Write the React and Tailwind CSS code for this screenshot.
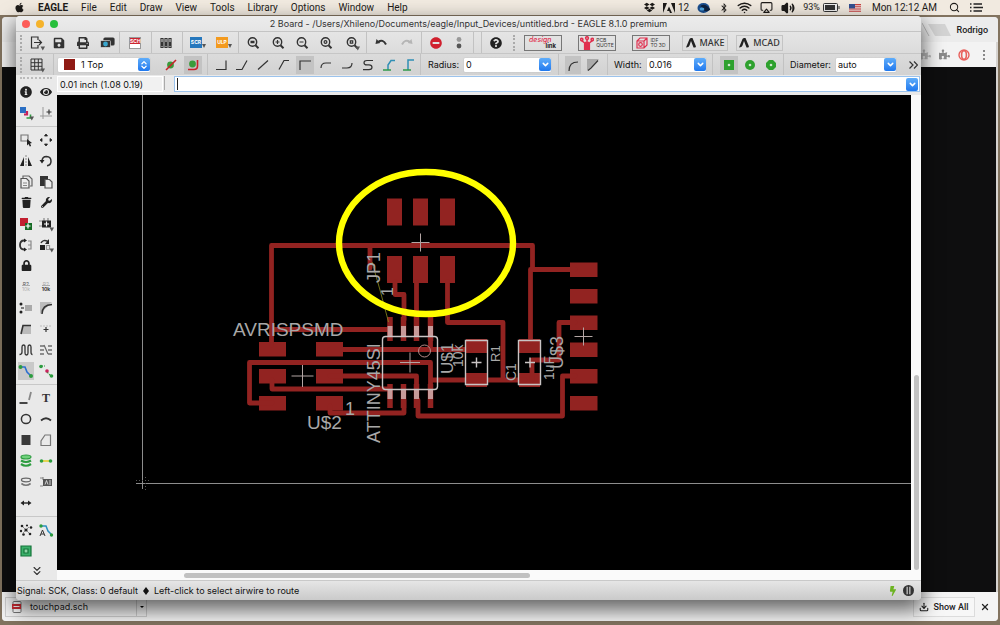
import React from 'react';
import {
  FaApple, FaDropbox, FaBluetoothB, FaSave, FaPrint, FaTrash, FaWrench, FaLock,
  FaInfoCircle, FaEye, FaQuestionCircle, FaMinusCircle, FaPuzzlePiece, FaBolt,
} from 'react-icons/fa';
import { Wifi, Airplay, Volume2, Search, ChevronsDown, ChevronDown, ChevronsUpDown, Download, X } from 'lucide-react';

const Svg = ({ size = 'w-4 h-4', children }) => (
  <svg viewBox="0 0 16 16" className={size} fill="none" stroke="#333" strokeWidth="1.2">
    {children}
  </svg>
);

const Tri = () => <path d="M11.5 11.5h4.5l-2.2 4z" fill="#555" stroke="none" />;

/* ---------- shared controls ---------- */

const Tool = ({ w = 'w-6', label, active, children }) => (
  <div className={`${w} shrink-0 flex justify-center`}>
    <button
      type="button"
      aria-label={label}
      className={`flex items-center justify-center h-[18px] w-[18px] ${active ? 'bg-[#c3c3c3]' : ''}`}
    >
      {children}
    </button>
  </div>
);

const Sep = ({ w = 'w-1' }) => (
  <div className={`${w} shrink-0 h-full flex justify-center`}>
    <div className="w-px h-full bg-[#c2c2c2]"></div>
  </div>
);

const Handle = ({ w = 'w-[10px]' }) => (
  <div className={`${w} shrink-0 flex justify-center`}>
    <div className="h-4 border-l-2 border-dotted border-[#aaa]"></div>
  </div>
);

const Arrow = ({ both }) => (
  <span className="w-3 h-[13px] shrink-0 rounded-[2px] bg-linear-to-b from-[#5fadfa] to-[#1f78ee] flex items-center justify-center text-white pointer-events-none">
    {both ? <ChevronsUpDown size={10} strokeWidth={3} /> : <ChevronDown size={9} strokeWidth={4} />}
  </span>
);

const Combo = ({ id, w, value, swatch, both, label }) => (
  <div className={`${w} shrink-0 h-[14px] bg-white flex items-center shadow-[0_0_1px_#999] rounded-[1px]`}>
    {swatch && <span className="ml-[6px] mr-1 w-[11px] h-[11px] bg-[#8f1a14]"></span>}
    <select id={id} aria-label={label} className="appearance-none flex-1 min-w-0 pl-[2px] h-[14px] leading-[14px] bg-transparent outline-none">
      <option>{value}</option>
    </select>
    <Arrow both={both} />
  </div>
);

/* ---------- mac menu bar ---------- */

const menus = ['File', 'Edit', 'Draw', 'View', 'Tools', 'Library', 'Options', 'Window', 'Help'];

const MenuBar = () => (
  <header className="h-[15px] shrink-0 flex items-center bg-[#f1eae0] text-[10px] leading-[15px] text-[#1d1b19] pl-[14px] pr-[17px]">
    <FaApple size={11} />
    <nav className="flex gap-[13px] ml-[13px]">
      <a href="#app" className="font-bold">EAGLE</a>
      {menus.map((m) => (
        <a key={m} href={`#${m}`}>{m}</a>
      ))}
    </nav>
    <div className="ml-auto flex items-center">
      <FaDropbox size={11} />
      <svg viewBox="0 0 12 10" className="w-3 h-[10px] ml-2" fill="#1d1b19">
        <path d="M0 0h4L0 10zM12 0H8l4 10zM6 3.4l3 6.6H7L6.2 8H4z" />
      </svg>
      <span className="ml-[3px]">12</span>
      <svg viewBox="0 0 14 12" className="w-[14px] h-3 ml-2">
        <ellipse cx="6.5" cy="6" rx="6" ry="5" fill="#1b4f8f" />
        <path d="M2 5q4-4 8-1t3 4q-5 3-7-1t-4-2z" fill="#0d2240" />
        <ellipse cx="5" cy="7" rx="2.4" ry="1.6" fill="#4fa6e0" />
      </svg>
      <FaBluetoothB size={10} className="ml-[8px]" />
      <Wifi size={15} strokeWidth={2.4} className="ml-[8px]" />
      <Airplay size={13} strokeWidth={2} className="ml-[8px]" />
      <Volume2 size={14} strokeWidth={2.4} fill="#1d1b19" className="ml-[8px]" />
      <span className="ml-[8px] text-[9px]">93%</span>
      <svg viewBox="0 0 17 9" className="w-[17px] h-[9px] ml-[3px]">
        <rect x=".5" y=".5" width="14" height="8" rx="1" fill="#eee" stroke="#333" />
        <rect x="2" y="2" width="10" height="5" fill="#333" />
        <path d="M15.5 3v3h1V3z" fill="#333" />
      </svg>
      <svg viewBox="0 0 12 8" className="w-3 h-2 ml-[9px]">
        <rect width="12" height="8" fill="#f3dede" />
        <path d="M0 .6h12M0 2.8h12M0 5h12M0 7.2h12" stroke="#c8433f" strokeWidth="1.1" />
        <rect width="6" height="4.4" fill="#33508f" />
      </svg>
      <span className="ml-[11px]">Mon 12:12 AM</span>
      <Search size={11} strokeWidth={2.2} className="ml-3" />
      <svg viewBox="0 0 13 9" className="w-[13px] h-[9px] ml-[10px]" stroke="#222" strokeWidth="1.4">
        <path d="M0 1h1.5M3.500 1h8.500M0 4.500h1.500M3.500 4.500h9.500M0 8h1.500M3.500 8h8.500" />
      </svg>
    </div>
  </header>
);

/* ---------- browser window behind ---------- */

const BrowserWindow = () => (
  <div className="absolute top-[2px] bottom-[4px] left-[2px] right-[2px] flex flex-col rounded-[4px] overflow-hidden bg-[#d6d3d0]">
    <div className="h-[25px] shrink-0 bg-[#ececec] flex items-center justify-end pr-[10px]">
      <svg viewBox="0 0 30 14" className="w-[30px] h-[14px]">
        <path d="M6 1h17l6 12H13z" fill="#d3d3d3" />
        <path d="M0 0l7 13" stroke="#bbb" />
      </svg>
      <span className="ml-1 text-[9px] leading-3 font-medium text-[#222]">Rodrigo</span>
    </div>
    <div className="h-[25px] shrink-0 mr-[2px] bg-[#f3f3f3] flex items-center justify-end gap-[8px] pr-[6px]">
      <FaPuzzlePiece size={11} color="#b9b9b9" />
      <FaPuzzlePiece size={11} color="#8a8a8a" />
      <svg viewBox="0 0 12 12" className="w-3 h-3" fill="none" stroke="#e8605c">
        <circle cx="6" cy="6" r="5" strokeWidth="1.4" />
        <ellipse cx="6" cy="6" rx="2.400" ry="4.200" strokeWidth="1.600" />
      </svg>
      <svg viewBox="0 0 12 12" className="w-3 h-3" fill="#666">
        <circle cx="6" cy="2" r="1" /><circle cx="6" cy="6" r="1" /><circle cx="6" cy="10" r="1" />
      </svg>
    </div>
    <div className="flex-1 mr-[2px] bg-[#0e0e0f]"></div>
    <div className="h-[29px] shrink-0 bg-[#f4f4f4] flex items-center justify-between pl-[3px] pr-[8px] text-[9px] leading-3 text-[#222]">
      <div className="w-[142px] h-5 flex items-center border border-[#cfcfcf]">
        <svg viewBox="0 0 10 12" className="w-[10px] h-3 ml-[6px]">
          <rect x="1" y=".5" width="8" height="11" rx="1" fill="#fff" stroke="#777" />
          <rect x="0" y="3" width="9" height="5" fill="#d02b33" />
          <path d="M1.500 5.500h6" stroke="#fff" />
        </svg>
        <a href="#touchpad" className="ml-2 font-['Inter']">touchpad.sch</a>
        <button type="button" aria-label="Download options" className="ml-auto h-full w-[10px] border-l border-[#cfcfcf] flex items-center justify-center">
          <span className="border-x-2 border-t-2 border-x-transparent border-t-black"></span>
        </button>
      </div>
      <div className="flex items-center gap-[5px]">
        <button type="button" className="h-5 w-[62px] flex items-center justify-center gap-1 border border-[#dcdcdc] bg-[#f7f7f7] font-medium">
          <Download size={10} strokeWidth={2.6} />Show All
        </button>
        <button type="button" aria-label="Close shelf"><X size={10} strokeWidth={3} /></button>
      </div>
    </div>
  </div>
);

/* ---------- toolbars ---------- */

const Lens = ({ children, drop }) => (
  <Svg>
    <circle cx="7.500" cy="7" r="4.200" strokeWidth="1.400" />
    <path d="M10.500 10.200l3 3" strokeWidth="2" />
    {children}
    {drop && <Tri />}
  </Svg>
);

const Badge = ({ text, color, drop }) => (
  <span className="flex items-end">
    <span className={`w-3 h-[11px] text-[5px] leading-[11px] text-center font-bold text-white ${color}`}>{text}</span>
    {drop && <span className="border-x-2 border-t-4 border-x-transparent border-t-[#555]"></span>}
  </span>
);

const autodesk = (
  <svg viewBox="0 0 10 10" className="w-[10px] h-[10px]" fill="#222">
    <path d="M0 9.500L3.500 1q.5-1 2-1h1L9.800 8q.4 1-.6 1.500H7.500L5 3 3.500 7.500Q3 9.500 0 9.500z" />
  </svg>
);

const ActionBar = () => (
  <div className="h-[22px] flex items-center border-b border-[#c6c6c6]">
    <Handle />
    <Tool w="w-[22px]" label="Open">
      <Svg><path d="M9 5V2H2.500v11H9v-3M5 7.500h7M10 5l2.500 2.500L10 10" /><Tri /></Svg>
    </Tool>
    <Tool w="w-[22px]" label="Save"><FaSave size={12} color="#333" /></Tool>
    <Tool w="w-[26px]" label="Print"><FaPrint size={12} color="#333" /></Tool>
    <Tool w="w-[22px]" label="CAM">
      <Svg>
        <rect x="5" y="3" width="10" height="7" rx="1" fill="#333" />
        <rect x="1.500" y="5.500" width="10" height="7" rx="1" fill="#333" stroke="#eee" strokeWidth=".6" />
        <circle cx="6.500" cy="9" r="2.400" fill="#38a5cc" stroke="none" />
      </Svg>
    </Tool>
    <Sep w="w-[2px]" />
    <Tool w="w-[30px]" label="Schematic">
      <span className="w-3 h-3 border border-[#999] bg-white">
        <span className="block h-[6px] bg-[#cc2430] text-white text-[5px] leading-[6px] font-bold text-center">SCH</span>
      </span>
    </Tool>
    <Sep w="w-[2px]" />
    <Tool w="w-7" label="Library">
      <Svg>
        <path d="M4 3v10M8 3v10M12 3v10" strokeWidth="3.200" />
        <path d="M4 4v3M8 4v3M12 4v3" stroke="#ddd" strokeWidth="1" />
        <path d="M3.500 11.500h1M7.500 11.500h1M11.500 11.500h1" stroke="#ddd" />
      </Svg>
    </Tool>
    <Sep />
    <Tool w="w-7" label="Script"><Badge text="SCR" color="bg-[#2577bd]" drop /></Tool>
    <Tool label="ULP"><Badge text="ULP" color="bg-[#f39a1e]" drop /></Tool>
    <Sep />
    <Tool w="w-[26px]" label="Zoom to fit"><Lens><path d="M5.500 7h4" strokeWidth="2.600" /></Lens></Tool>
    <Tool label="Zoom in"><Lens><path d="M5.500 7h4M7.500 5v4" /></Lens></Tool>
    <Tool label="Zoom out"><Lens><path d="M5.500 7h4" /></Lens></Tool>
    <Tool label="Redraw"><Lens><circle cx="7.500" cy="7" r="1.400" /></Lens></Tool>
    <Tool w="w-7" label="Select zoom"><Lens drop><path d="M6.300 5.800h2.400v2.400H6.300z" /></Lens></Tool>
    <Sep w="w-px" />
    <Tool w="w-7" label="Undo">
      <Svg><path d="M5 7q5-3.500 8 2.500" strokeWidth="2" /><path d="M2.500 9l1-5 3.800 4z" fill="#333" stroke="none" /></Svg>
    </Tool>
    <Tool label="Redo">
      <Svg><path d="M11 7Q6 3.500 3 9.500" stroke="#b5b5b5" strokeWidth="2" /><path d="M13.500 9l-1-5-3.800 4z" fill="#b5b5b5" stroke="none" /></Svg>
    </Tool>
    <Sep />
    <Tool w="w-[26px]" label="Stop"><FaMinusCircle size={12} color="#d0202e" /></Tool>
    <Tool w="w-5" label="Go">
      <Svg><circle cx="8" cy="4.500" r="2.400" fill="#999" stroke="none" /><circle cx="8" cy="11" r="2.400" fill="#555" stroke="none" /></Svg>
    </Tool>
    <Sep w="w-2" />
    <Sep w="w-2" />
    <Tool w="w-[22px]" label="Help"><FaQuestionCircle size={12} color="#222" /></Tool>
    <Handle w="w-[13px]" />

    <div className="flex items-center gap-4 ml-1">
      <button type="button" className="w-[38px] h-4 border border-[#777] flex flex-col items-start justify-center pl-1 text-[7px] leading-[6px] font-medium italic text-[#e0304f]">
        design<span className="self-end pr-[5px] text-[6px] leading-[5px] font-bold not-italic text-[#222]">link</span>
      </button>
      <button type="button" className="w-[38px] h-4 border border-[#777] flex items-center justify-center gap-[2px]">
        <svg viewBox="0 0 12 12" className="w-[14px] h-[14px]" stroke="#e0304f" strokeWidth="1.300" fill="none">
          <path d="M4 12V6L1.500 4M6 12V3M8 12V6l2.500-2M5 12V5M7 12V5" />
          <circle cx="1.500" cy="3" r="1" /><circle cx="6" cy="1.800" r="1.200" /><circle cx="10.500" cy="3" r="1" />
        </svg>
        <span className="text-[5px] leading-[5px] text-left text-[#333]">PCB<br />QUOTE</span>
      </button>
      <button type="button" className="w-[38px] h-4 border border-[#777] flex items-center justify-center gap-[2px]">
        <svg viewBox="0 0 12 12" className="w-3 h-3" stroke="#e0304f" strokeWidth="1.200" fill="none">
          <path d="M1 4l3-3h7v7l-3 3H1zM1 4h7v7M8 4l3-3" />
          <circle cx="4.500" cy="7.500" r="1.800" />
        </svg>
        <span className="text-[5px] leading-[5px] text-left text-[#333]">IDF<br />TO 3D</span>
      </button>
    </div>
    <div className="flex items-center gap-2 ml-3 text-[9px] font-medium text-[#333] font-['Noto_Sans',sans-serif]">
      <button type="button" className="h-4 w-[46px] border border-[#c4c4c4] flex items-center justify-center gap-1">{autodesk}MAKE</button>
      <button type="button" className="h-4 w-[47px] border border-[#c4c4c4] flex items-center justify-center gap-1">{autodesk}MCAD</button>
    </div>
  </div>
);

const bends = [
  { d: 'M3 12.500h10V3.500' },
  { d: 'M2 12.500h6L13 3.500' },
  { d: 'M3 12.500L13 3.500' },
  { d: 'M3 12.500L8 3.500h5' },
  { d: 'M3 13V4h11', active: true },
  { d: 'M3 11q0-5 5-5h5' },
  { d: 'M3 11h5q5 0 5-5' },
  { d: 'M13 3.500H7q-3 0-3 2.200t3 2.200h2q3 0 3 2.400t-3 2.400H3' },
];

const ParamBar = () => (
  <div className="h-[21px] flex items-center text-[#111]">
    <Handle />
    <Tool w="w-[22px]" label="Grid">
      <Svg><path d="M2 2h11v11H2zM5.700 2v11M9.300 2v11M2 5.700h11M2 9.300h11" strokeWidth="1" /><Tri /></Svg>
    </Tool>
    <Sep w="w-[10px]" />
    <Combo label="Layer" w="w-[92px]" value="1 Top" swatch both />
    <div className="w-[10px]"></div>
    <Tool w="w-[22px]" label="Ignore obstacles">
      <Svg><circle cx="7.500" cy="8" r="3.400" fill="#3a9b3a" stroke="none" /><path d="M3 13L13 3" stroke="#c8222a" strokeWidth="1.600" /></Svg>
    </Tool>
    <Tool w="w-[22px]" label="Walk around obstacles" active>
      <Svg><circle cx="7.500" cy="7" r="3.400" fill="#3a9b3a" stroke="none" /><path d="M3 12.500h6q3.500 0 3.500-3.500V3" stroke="#c8222a" strokeWidth="1.600" /></Svg>
    </Tool>
    <Sep w="w-[6px]" />
    {bends.map((b, i) => (
      <Tool key={b.d} w="w-[21px]" label={`Bend ${i}`} active={b.active}>
        <Svg><path d={b.d} /></Svg>
      </Tool>
    ))}
    <Tool w="w-5" label="Bend 8">
      <Svg><path d="M8 13V8l3-4.500h4" stroke="#2f8fb5" strokeWidth="1.500" /><path d="M3 13h8" stroke="#2f9a4a" strokeWidth="1.600" /></Svg>
    </Tool>
    <Tool w="w-5" label="Bend 9">
      <Svg><path d="M8 13V3h6" stroke="#2f8fb5" strokeWidth="1.500" /><path d="M3 13h8" stroke="#2f9a4a" strokeWidth="1.600" /></Svg>
    </Tool>
    <Sep />
    <label htmlFor="radius" className="w-[36px] ml-[6px] shrink-0">Radius:</label>
    <Combo id="radius" w="w-[87px]" value="0" />
    <Sep w="w-[14px]" />
    <Tool w="w-4" label="Round miter" active><Svg><path d="M4 14q0-9 9-9" /></Svg></Tool>
    <Tool w="w-6" label="Straight miter">
      <Svg><path d="M2 2h12L2 14z" fill="#aaa" stroke="none" /><path d="M3 13.500l3-2.500 7-7.500" /></Svg>
    </Tool>
    <Sep />
    <label htmlFor="width" className="w-[33px] ml-[5px] shrink-0">Width:</label>
    <Combo id="width" w="w-[59px]" value="0.016" />
    <Sep w="w-3" />
    <Tool w="w-[21px]" label="Square via" active><Svg><path d="M3 3h10v10H3z" fill="#2ea12e" stroke="none" /><circle cx="8" cy="8" r="1.300" fill="#cfe8cf" stroke="none" /></Svg></Tool>
    <Tool w="w-[21px]" label="Round via"><Svg><circle cx="8" cy="8" r="5" fill="#2ea12e" stroke="none" /><circle cx="8" cy="8" r="1.300" fill="#cfe8cf" stroke="none" /></Svg></Tool>
    <Tool w="w-[21px]" label="Octagon via"><Svg><path d="M6 3h4l3 3v4l-3 3H6l-3-3V6z" fill="#2ea12e" stroke="none" /><circle cx="8" cy="8" r="1.300" fill="#cfe8cf" stroke="none" /></Svg></Tool>
    <Sep />
    <label htmlFor="diameter" className="w-[46px] ml-[5px] shrink-0">Diameter:</label>
    <Combo id="diameter" w="w-[60px]" value="auto" />
    <button type="button" aria-label="More" className="ml-auto pr-[3px]">
      <svg viewBox="0 0 9 8" className="w-[9px] h-2" fill="none" stroke="#333" strokeWidth="1.200"><path d="M.5.5L4 4 .5 7.500M5 .5L8.500 4 5 7.500" /></svg>
    </button>
  </div>
);

/* ---------- left palette ---------- */

const g = '#2c9c3f';

const palette = [
  [
    ['Info', <FaInfoCircle size={12} color="#222" />],
    ['Show', <FaEye size={12} color="#222" />],
    ['Layers', <Svg><path d="M2 2h6v6H2z" fill="#2a6fc4" stroke="none" /><path d="M9 6v3.500H6" stroke="#c7225b" strokeWidth="2.200" /><path d="M12.500 9.500V13H8.500" stroke={g} strokeWidth="1.600" /><Tri /></Svg>],
    ['Mark', <Svg><path d="M5 2v12M2 11h12" stroke="#999" strokeWidth="1" /><path d="M8.500 7h5M11 4.500v5" /></Svg>],
  ],
  [
    ['Group', <Svg><path d="M3 3h7v6H3z" stroke="#777" /><path d="M9 7l5 4-2 .4 1.200 2.600-1.400.6L10.500 12 9 13.500z" fill="#222" stroke="none" /></Svg>],
    ['Move', <Svg><path d="M8 2l1.500 2H6.500zM8 14l1.500-2H6.500zM2 8l2-1.500v3zM14 8l-2-1.500v3z" fill="#222" stroke="#222" strokeWidth=".8" /></Svg>],
    ['Mirror', <Svg><path d="M6 4v9H2zM10 4v9h4z" fill="#222" stroke="none" /><path d="M8 2v12" stroke="#999" strokeDasharray="2 1" /></Svg>],
    ['Rotate', <Svg><path d="M4 8.500q0-5 4.500-5 4.500.2 4.500 4.700 0 4-4 4.500" strokeWidth="1.500" /><path d="M1.500 7h5L4 10.500z" fill="#222" stroke="none" /></Svg>],
    ['Copy', <Svg><path d="M5 4V2h6l3 3v7h-2" stroke="#666" /><path d="M3 4.500h5.500L11 7v7H3z" fill="#eee" stroke="#555" /><path d="M5 9h4M5 11.500h4" stroke="#888" /></Svg>],
    ['Paste', <Svg><path d="M2 2h8v10H2z" fill="#333" stroke="none" /><path d="M7 5.500h4.500L14 8v6H7z" fill="#eee" stroke="#555" /></Svg>],
    ['Delete', <FaTrash size={11} color="#222" />],
    ['Change', <FaWrench size={11} color="#222" />],
    ['Add', <Svg><path d="M2 2h8v8H2z" fill="#c21f30" stroke="none" /><path d="M7 7h7v7H7z" fill="#156b24" stroke="none" /><path d="M7.500 10h5M10 7.500v5" stroke="#fff" /></Svg>],
    ['Replace', <Svg><path d="M1 5h3M1 10h3M6 2v3M10 2v3" stroke="#888" /><path d="M4 4.500h9v7H4z" fill="#222" stroke="none" /><path d="M6 8h5M8.500 5.500v5" stroke="#fff" /><Tri /></Svg>],
    ['Pinswap', <Svg><path d="M6 3.500q-4 0-4 4.500t4 4.500" strokeWidth="1.800" /><path d="M6 1.500v4L9 3.500zM6 10.500v4l3-2z" fill="#222" stroke="none" /><path d="M10 4h3v8h-3M10 8h3" stroke="#888" /></Svg>],
    ['Gateswap', <Svg><path d="M3 6q2-4 7-1.500" strokeWidth="1.500" /><path d="M11 2v5H7z" fill="#222" stroke="none" /><path d="M2 8h5v5H2z" fill="#222" stroke="none" /><path d="M8.500 8.500h3v4h-3z" stroke="#999" /><Tri /></Svg>],
    ['Lock', <FaLock size={11} color="#222" />],
    null,
    ['Name', <span className="text-[5px] leading-[5px] text-[#555]">R2<br /><span className="text-[#aaa] border-t border-[#aaa]">10k</span></span>],
    ['Value', <span className="text-[5px] leading-[5px] text-[#aaa]">R2<br /><span className="text-[#333] font-bold border-t border-[#aaa]">10k</span></span>],
    ['Smash', <Svg><path d="M7 5h7v6H7z" fill="#aaa" stroke="none" /><circle cx="3" cy="4" r="1.500" fill="#222" stroke="none" /><circle cx="3" cy="12" r="1.500" fill="#222" stroke="none" /><path d="M3 8h3" /></Svg>],
    ['Miter', <Svg><path d="M2 2h12L2 14z" fill="#bbb" stroke="none" /><path d="M4 14q0-9 10-9.500" strokeWidth="1.500" /></Svg>],
    ['Split', <Svg><path d="M5 5h8v8H3z" fill="#bbb" stroke="none" /><path d="M3 13l2-8.500h8" strokeWidth="1.600" /></Svg>],
    ['Optimize', <Svg><path d="M2 5h12" stroke="#bbb" strokeDasharray="2 1" /><path d="M8 6v5M5.500 8.500h5" /></Svg>],
    ['Meander', <Svg><path d="M1.500 12.500q2.500 0 2.500-2.500V5q0-2 1.500-2T7 5v6q0 2 1.500 2t1.500-2V5q0-2 1.500-2T13 5v5q0 2.500 1.500 2.500" strokeWidth="1.300" /></Svg>],
    ['Fanout', <Svg><path d="M2 4h4M2 8h4M2 12h4M10 4h4M10 8h4M10 12h4" /><path d="M6 3l4 9" stroke="#666" /></Svg>],
    ['Route', <Svg><path d="M3 4h4l2 5 4 4" stroke="#2b6fd0" strokeWidth="1.600" /><circle cx="2.500" cy="4" r="2" fill={g} stroke="none" /><circle cx="13" cy="13" r="2" fill={g} stroke="none" /></Svg>, true],
    ['Ripup', <Svg><path d="M3 3h4M9 9l4 4" stroke={g} strokeWidth="1.200" strokeDasharray="2 1" /><circle cx="3" cy="3.500" r="1.800" fill={g} stroke="none" /><circle cx="9" cy="8" r="1.800" fill="#c7225b" stroke="none" /><circle cx="13.500" cy="13" r="1.800" fill={g} stroke="none" /></Svg>],
  ],
  [
    ['Line', <Svg><path d="M1.500 13h8" strokeWidth="1.800" /><path d="M11 10l2-8" stroke="#888" strokeWidth="1.800" /></Svg>],
    ['Text', <span className="text-[12px] leading-4 font-bold font-['Liberation_Serif',serif] text-[#333]">T</span>],
    ['Circle', <Svg><circle cx="8" cy="8" r="4.600" strokeWidth="1.500" /></Svg>],
    ['Arc', <Svg><path d="M3 9.500q5-4.500 10 0" strokeWidth="1.800" /></Svg>],
    ['Rectangle', <Svg><path d="M3.500 3h9v10h-9z" fill="#3a3a3a" stroke="none" /></Svg>],
    ['Polygon', <Svg><path d="M3 13.500V9l4-6h5.500v10.500z" stroke="#777" /></Svg>],
    ['Via', <Svg><ellipse cx="8" cy="4" rx="5" ry="2" fill="#6fd07b" stroke={g} /><path d="M3 7.500q5 3 10 0M3 11q5 3.500 10 0" stroke={g} strokeWidth="2.200" /></Svg>],
    ['Signal', <Svg><path d="M4 8h8" stroke="#e3cf2c" strokeWidth="1.600" /><circle cx="3.500" cy="8" r="1.800" fill={g} stroke="none" /><circle cx="12.500" cy="8" r="1.800" fill={g} stroke="none" /></Svg>],
    ['Hole', <Svg><ellipse cx="8" cy="6" rx="4.600" ry="1.800" stroke="#666" /><path d="M3.400 9.500q4.600 3.500 9.200 0" stroke="#777" strokeWidth="1.600" /></Svg>],
    ['Attribute', <Svg><path d="M2 4h3M2 12h3M5 3v3" stroke="#888" /><path d="M5 5h9v7H5z" fill="#555" stroke="none" /><path d="M7 10.500l1.500-4 1.500 4M12 6v5" stroke="#ddd" strokeWidth=".9" /></Svg>],
    ['Dimension', <Svg><path d="M5 8h6" strokeWidth="1.500" /><path d="M2.500 8L6 5.500v5zM13.500 8L10 5.500v5z" fill="#222" stroke="none" /></Svg>],
    null,
  ],
  [
    ['Ratsnest', <Svg><path d="M5 5l6 6M11 5l-6 6" strokeWidth=".5" /><g fill="#222" stroke="none"><circle cx="4" cy="4" r="1.300" /><circle cx="9" cy="3.500" r="1.100" /><circle cx="13" cy="5.500" r="1.300" /><circle cx="8" cy="8" r="1.600" /><circle cx="3" cy="9" r="1.200" /><circle cx="5.500" cy="12.500" r="1.300" /><circle cx="12" cy="12" r="1.300" /></g></Svg>],
    ['Autorouter', <Svg><path d="M3 4h5l2 5 3 3" stroke="#2b8fc0" strokeWidth="1.500" /><circle cx="3" cy="4" r="1.700" fill={g} stroke="none" /><circle cx="13.500" cy="13" r="1.700" fill={g} stroke="none" /><path d="M2 14l2.500-6L7 14M3 12h3" strokeWidth="1" /></Svg>],
    ['DRC', <Svg><path d="M3 3h10v10H3z" fill="#3bb06a" stroke="#14753a" /><path d="M6 6h4v4H6z" fill="#8ed6a8" stroke="#14753a" /></Svg>],
    null,
  ],
];

const Palette = () => (
  <aside className="w-[41px] shrink-0 flex flex-col items-start bg-[#e9e9e9]">
    <div className="h-[6px] w-8 ml-1 flex items-center"><div className="w-full border-t-2 border-dotted border-[#bbb]"></div></div>
    {palette.map((group, i) => (
      <React.Fragment key={i}>
        {i > 0 && <div className="h-[6px] w-full flex items-center"><div className="w-full h-px bg-[#c8c8c8]"></div></div>}
        <div className="grid grid-cols-2">
          {group.map((t, j) =>
            t ? (
              <div key={j} className="w-5 h-[21px] flex items-center justify-center">
                <button type="button" aria-label={t[0]} className={`w-4 h-[18px] flex items-center justify-center ${t[2] ? 'bg-[#c9c9c9]' : ''}`}>
                  {t[1]}
                </button>
              </div>
            ) : (
              <div key={j}></div>
            ),
          )}
        </div>
      </React.Fragment>
    ))}
    <button type="button" aria-label="More tools" className="flex-1 w-full flex items-center justify-center">
      <ChevronsDown size={14} color="#333" />
    </button>
  </aside>
);

/* ---------- board ---------- */

const pads = [
  // programming header
  ...[387, 413, 440].flatMap((x) => [[x, 198.5, 15, 27], [x, 256, 15, 27]]),
  // left connector
  ...[342, 369, 396].flatMap((y) => [[259, y, 27, 14.5], [316, y, 27, 14.5]]),
  // right connector
  ...[262.5, 289, 315.5, 342.5, 369, 396].map((y) => [570, y, 27.5, 14.5]),
  // R1 and C1
  ...[466, 519].flatMap((x) => [[x, 339, 21, 14], [x, 373, 21, 14]]),
];

const traces = [
  'M271.500 345V245.500H532.500V269.500H575',
  'M530.500 269.500V342',
  'M370 245.500V268',
  'M395 282V294.500H404V320',
  'M416.500 282V320',
  'M447.500 282V322.500H503V380',
  'M271.500 329.500H390',
  'M330 349.500H470M430.500 320V349.500',
  'M272 403H249.500V362.500H430.500V390',
  'M330 376H416.500V390',
  'M272 380V389H388',
  'M330 406V413H404V400',
  'M430.500 380H525',
  'M418 400V416H562.500V376H575',
  'M532 380V360H559V322.500H575',
];

const pins = [390, 403.5, 416.5, 430.5];

const crosses = [[420.5, 242.5, 9], [302.5, 376, 11], [410, 362.5, 10], [583.5, 336.5, 9]];

const labels = [
  ['JP1', 380, 283, 18, true],
  ['1', 393, 296, 16, true],
  ['ATTINY45SI', 380, 443, 18, true],
  ['U$1', 453, 374, 17, true],
  ['10k', 463, 367, 14, true],
  ['R1', 500, 362, 13, true],
  ['C1', 516, 381, 14, true],
  ['1uF', 554, 380, 14, true],
  ['U$3', 563, 369, 18, true],
  ['AVRISPSMD', 233, 335.5, 19],
  ['U$2', 307, 429, 19],
  ['1', 345, 415, 18],
];

const Board = () => (
  <svg viewBox="57 95 854 475" preserveAspectRatio="xMinYMin slice" className="block w-full h-full bg-black">
    <g stroke="#8d8d8d" strokeWidth="1">
      <path d="M142.500 95V489M136 483.500H911" />
      <path d="M136 480.500h14M145.500 477v14" strokeDasharray="1 2" stroke="#555" />
    </g>
    <g fill="#922321">
      {pads.map(([x, y, w, h]) => <rect key={`${x}-${y}`} x={x} y={y} width={w} height={h} />)}
    </g>
    <path d={traces.join('')} fill="none" stroke="#922321" strokeWidth="4.800" strokeLinejoin="round" strokeLinecap="round" />
    {pins.map((x) => (
      <g key={x}>
        <path d={`M${x} 317V341M${x} 384V408`} stroke="#922321" strokeWidth="5.500" />
        <path d={`M${x} 326V337M${x} 389V399`} stroke="#c79a99" strokeWidth="5" />
      </g>
    ))}
    <path d="M372 262L380 290L388.500 322" stroke="#8d8d1c" strokeWidth=".8" fill="none" />
    <g fill="none" stroke="#c9c4c4" strokeWidth="1.400">
      <rect x="382.500" y="336.500" width="55" height="53" rx="3" />
      <path d="M465.500 340.500h22v44h-22zM518.500 340.500h22v44h-22z" />
      <circle cx="424.500" cy="351" r="6" strokeWidth="1" stroke="#b58a88" />
      <path d="M471.500 362.500h10M476.500 357.500v10M525 362.500h10M530 357.500v10" />
    </g>
    <g stroke="#b3a6a4" strokeWidth="1">
      {crosses.map(([x, y, r]) => <path key={x} d={`M${x - r} ${y}h${r * 2}M${x} ${y - r}v${r * 2}`} />)}
    </g>
    <g fill="#a8a8a8" className="font-['Liberation_Sans',sans-serif]">
      {labels.map(([text, x, y, size, up], i) => (
        <text key={i} x={x} y={y} fontSize={size} transform={up ? `rotate(-90 ${x} ${y})` : undefined}>{text}</text>
      ))}
    </g>
    <ellipse cx="426" cy="243" rx="87" ry="71" fill="none" stroke="#ffff00" strokeWidth="6.400" />
  </svg>
);

/* ---------- EAGLE window ---------- */

const EagleWindow = () => (
  <main className="absolute top-[1px] bottom-[25px] left-4 right-[79px] flex flex-col rounded-[4px] overflow-hidden bg-[#e4e4e4] text-[9px] text-[#111] font-['Inter',sans-serif] shadow-[0_8px_20px_2px_rgba(0,0,0,0.6)]">
    <div className="shrink-0 bg-linear-to-b from-[#ececec] to-[#d2d2d2]">
      <div className="h-4 flex items-center border-b border-[#c4c4c4] pl-[6px] pr-[42px]">
        <div className="flex gap-[6px]">
          <button type="button" aria-label="Close" className="w-2 h-2 rounded-full bg-[#fc5b57]"></button>
          <button type="button" aria-label="Minimize" className="w-2 h-2 rounded-full bg-[#f5b32b]"></button>
          <button type="button" aria-label="Zoom" className="w-2 h-2 rounded-full bg-[#27bf3c]"></button>
        </div>
        <h1 className="flex-1 text-center leading-4 text-[#333]">2 Board - /Users/Xhileno/Documents/eagle/Input_Devices/untitled.brd - EAGLE 8.1.0 premium</h1>
      </div>
      <ActionBar />
      <ParamBar />
    </div>

    <div className="flex-1 min-h-0 flex">
      <Palette />
      <div className="flex-1 min-w-0 flex flex-col">
        <div className="h-5 shrink-0 flex items-start pt-px bg-[#e9e9e9]">
          <output className="w-[106px] h-4 leading-4 pl-[2px] border border-white bg-[#f1f1f1]">0.01 inch (1.08 0.19)</output>
          <span className="w-2 h-[14px] ml-[1px] mr-[2px] border-l border-[#aaa]"></span>
          <div className="flex-1 h-4 flex items-center bg-white border border-[#9cc3ec] pr-px mr-[1px]">
            <span className="w-px h-3 ml-[2px] bg-[#222]"></span>
            <input type="text" aria-label="Command line" className="flex-1 h-[14px] outline-none" />
            <Arrow />
          </div>
        </div>
        <div className="flex-1 min-h-0 flex">
          <div className="flex-1 min-w-0"><Board /></div>
          <div className="w-[10px] bg-[#fafafa] flex flex-col items-center justify-end">
            <div className="w-[5px] h-[41%] rounded-full bg-[#c1c1c1]"></div>
          </div>
        </div>
        <div className="h-[10px] shrink-0 bg-[#fafafa] flex items-center pl-[127px]">
          <div className="w-[47%] h-[5px] rounded-full bg-[#c1c1c1]"></div>
        </div>
      </div>
    </div>

    <footer className="h-5 shrink-0 flex items-center pl-[1px] pr-[7px] border-t border-[#c9c9c9] bg-linear-to-b from-[#e6e6e6] to-[#cacaca]">
      <span>Signal: SCK, Class: 0 default</span>
      <svg viewBox="0 0 6 8" className="w-[6px] h-2 mx-[5px]"><path d="M3 0l3 4-3 4-3-4z" fill="#111" /></svg>
      <span>Left-click to select airwire to route</span>
      <FaBolt size={10} color="#6db321" className="ml-auto" />
      <svg viewBox="0 0 12 12" className="w-[11px] h-[11px] ml-[5px]"><circle cx="6" cy="6" r="6" fill="#333" /><path d="M4.500 2v8M7.500 2v8" stroke="#eee" strokeWidth="1.100" /></svg>
    </footer>
  </main>
);

export default function App() {
  return (
    <div className="h-screen flex flex-col overflow-hidden bg-[#82735f] font-['Roboto',sans-serif]">
      <MenuBar />
      <div className="relative flex-1">
        <BrowserWindow />
        <EagleWindow />
      </div>
    </div>
  );
}
